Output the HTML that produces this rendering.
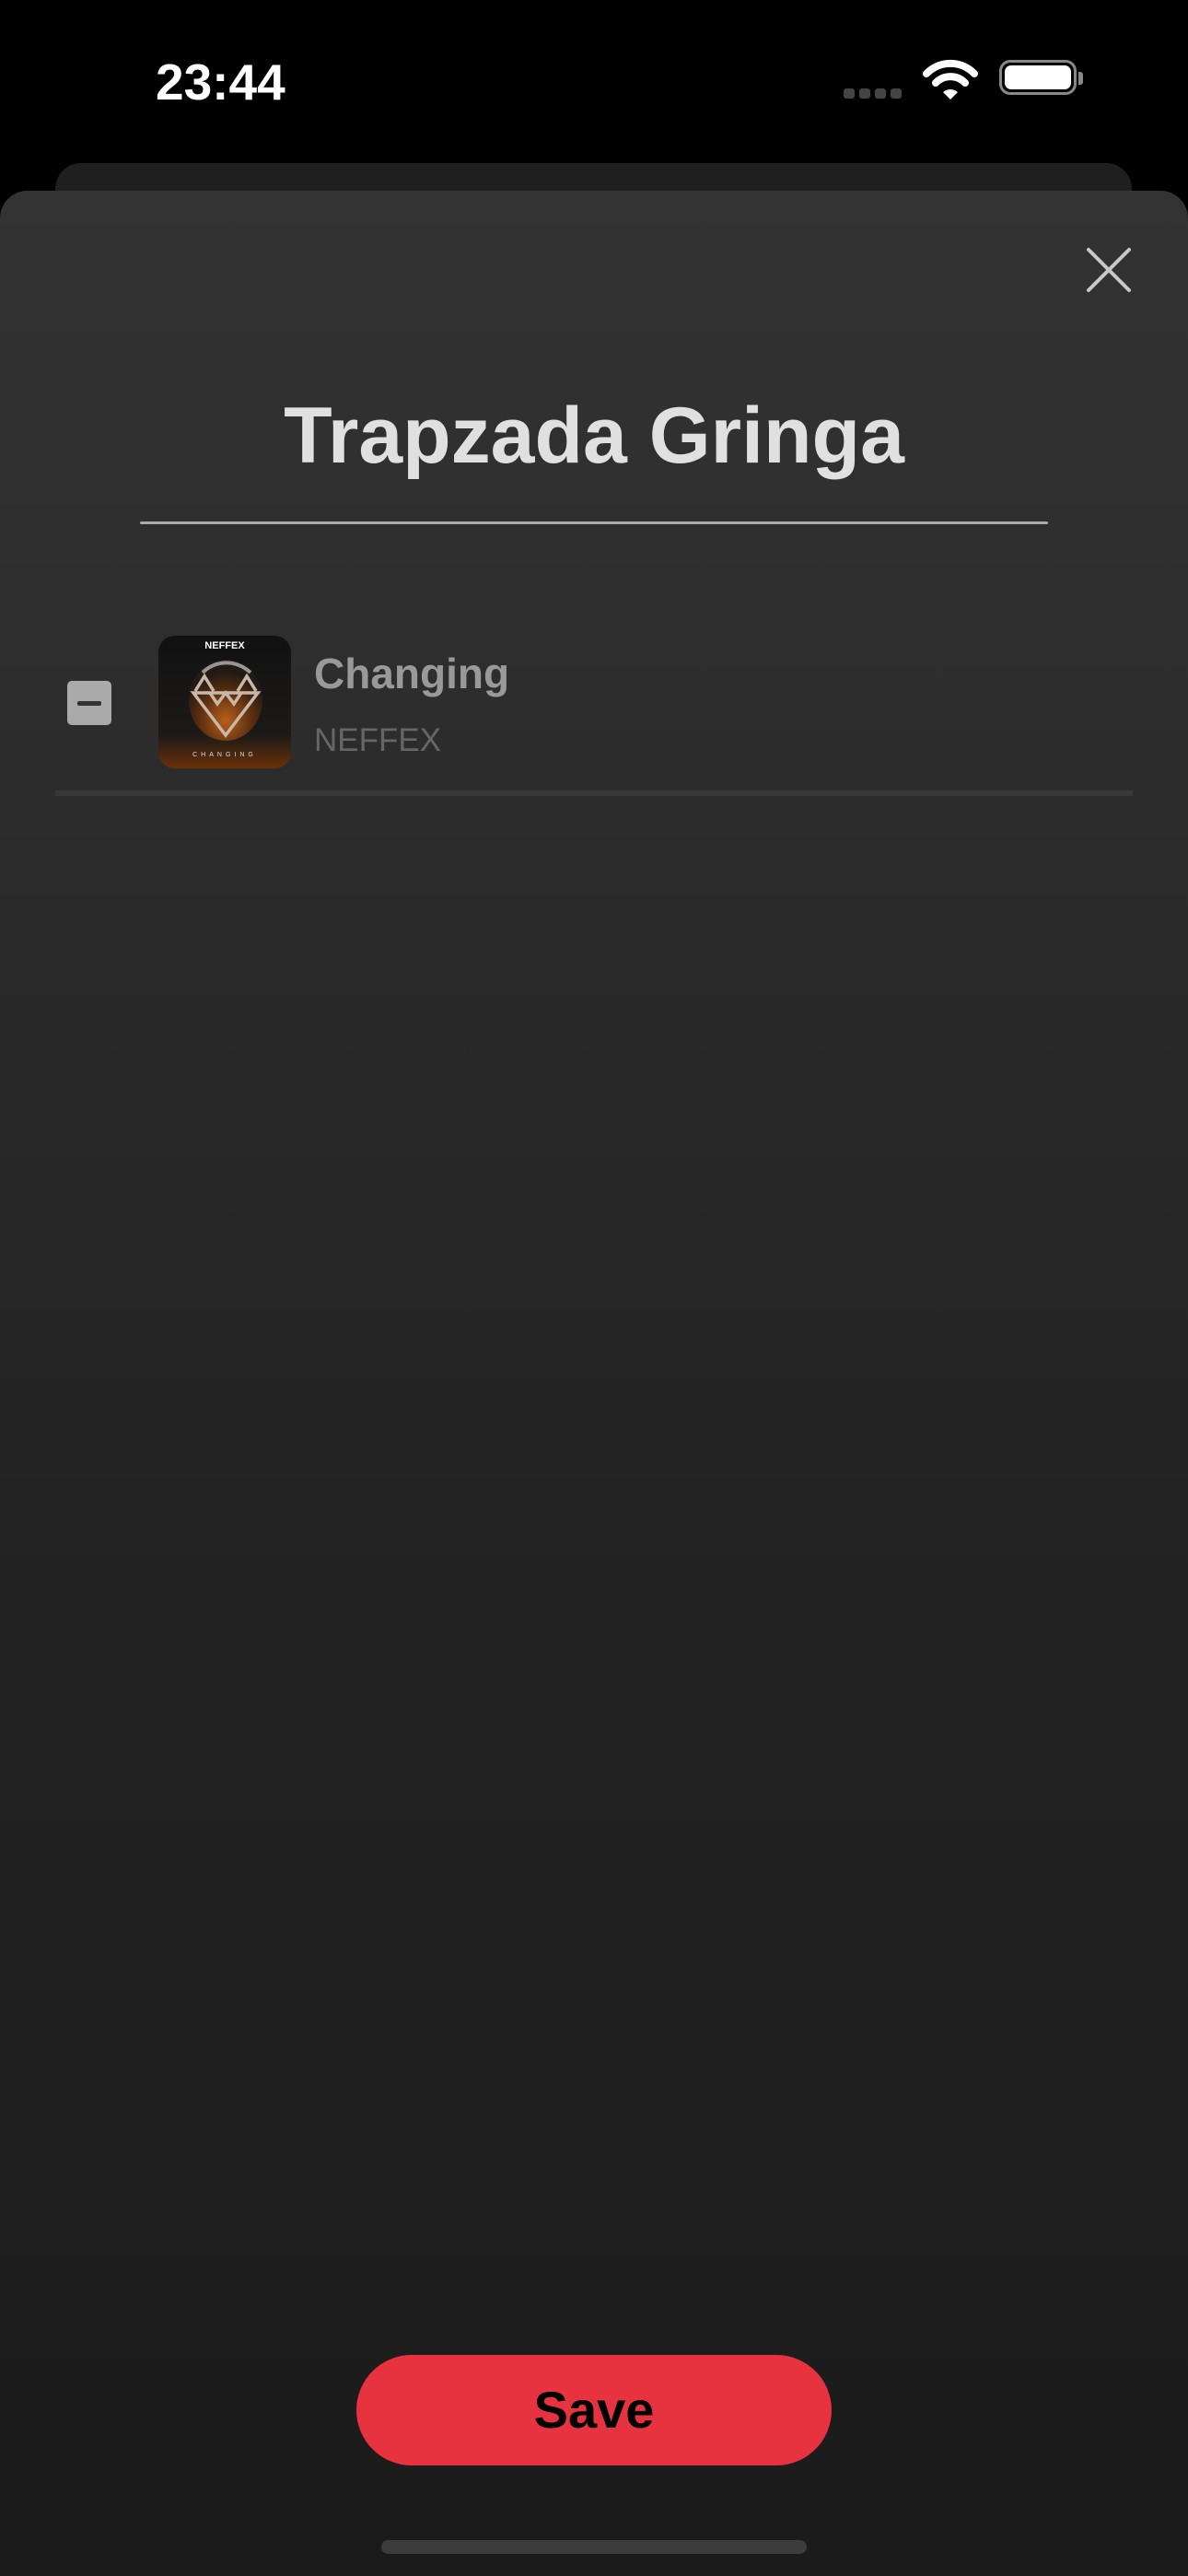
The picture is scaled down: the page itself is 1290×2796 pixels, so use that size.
<!DOCTYPE html>
<html><head><meta charset="utf-8"><style>
html,body{margin:0;padding:0}
body{width:1290px;height:2796px;background:#000;position:relative;overflow:hidden;font-family:"Liberation Sans",sans-serif}
.a{position:absolute}
</style></head><body>
<div class="a" style="left:169px;top:57px;font-size:55px;font-weight:bold;color:#fff">23:44</div>
<div class="a" style="left:916px;top:96px;width:12px;height:11px;border-radius:3px;background:#444"></div>
<div class="a" style="left:933px;top:96px;width:12px;height:11px;border-radius:3px;background:#444"></div>
<div class="a" style="left:950px;top:96px;width:12px;height:11px;border-radius:3px;background:#444"></div>
<div class="a" style="left:967px;top:96px;width:12px;height:11px;border-radius:3px;background:#444"></div>
<svg class="a" style="left:1002px;top:64px" width="60" height="46" viewBox="0 0 60 46">
<path d="M4 16 A36 36 0 0 1 56 16" stroke="#fff" stroke-width="8" fill="none" stroke-linecap="round"/>
<path d="M14 26 A22 22 0 0 1 46 26" stroke="#fff" stroke-width="8" fill="none" stroke-linecap="round"/>
<path d="M22 36 L30 44 L38 36 A12 12 0 0 0 22 36Z" fill="#fff"/>
</svg>
<div class="a" style="left:1085px;top:65px;width:84px;height:38px;border:3px solid #888;border-radius:12px;box-sizing:border-box"></div>
<div class="a" style="left:1091px;top:71px;width:72px;height:26px;background:#fff;border-radius:7px"></div>
<div class="a" style="left:1171px;top:78px;width:5px;height:14px;background:#888;border-radius:0 3px 3px 0"></div>

<div class="a" style="left:60px;top:177px;width:1169px;height:60px;background:#1f1f1f;border-radius:28px 28px 0 0"></div>
<div class="a" style="left:0;top:207px;width:1290px;height:2589px;background:linear-gradient(#333 0%,#2c2c2c 25%,#232323 55%,#1b1b1b 100%);border-radius:30px 30px 0 0"></div>

<svg class="a" style="left:1178px;top:268px" width="52" height="50"><path d="M4 3 L48 47 M48 3 L4 47" stroke="#c8c8c8" stroke-width="4" stroke-linecap="round"/></svg>

<div class="a" style="left:0;top:424px;width:1290px;text-align:center;font-size:86px;font-weight:bold;color:#e0e0e0">Trapzada Gringa</div>
<div class="a" style="left:152px;top:566px;width:986px;height:3px;background:#aaa;border-radius:2px"></div>

<div class="a" style="left:73px;top:739px;width:48px;height:48px;background:#aaa;border-radius:5px"></div>
<div class="a" style="left:84px;top:761px;width:26px;height:5px;background:#333;border-radius:2px"></div>

<svg class="a" style="left:172px;top:690px" width="144" height="144" viewBox="0 0 144 144">
<defs>
<linearGradient id="bg" x1="0" y1="0" x2="0" y2="1"><stop offset="0" stop-color="#111"/><stop offset="0.75" stop-color="#1c1a18"/><stop offset="1" stop-color="#6a3008"/></linearGradient>
<radialGradient id="orb" cx="0.5" cy="0.75" r="0.6"><stop offset="0" stop-color="#b8601a"/><stop offset="0.6" stop-color="#5a2e10"/><stop offset="1" stop-color="#221a15"/></radialGradient>
<clipPath id="c"><rect width="144" height="144" rx="18"/></clipPath>
</defs>
<g clip-path="url(#c)">
<rect width="144" height="144" fill="url(#bg)"/>
<ellipse cx="73" cy="70" rx="40" ry="44" fill="url(#orb)"/>
<path d="M48 40 A40 44 0 0 1 100 40" stroke="#ccc" stroke-width="4" fill="none" opacity="0.7"/>
<g stroke="#c8b8a8" stroke-width="3.5" fill="none">
<path d="M40 60 L50 44 L60 60"/><path d="M86 60 L96 44 L106 60"/>
<path d="M38 62 L108 62 L73 108 Z"/><path d="M56 62 L64 74 L73 62 L82 74 L90 62"/>
</g>
<text x="72" y="14" text-anchor="middle" font-size="11" font-weight="bold" fill="#fff" font-family="Liberation Sans">NEFFEX</text>
<text x="72" y="131" text-anchor="middle" font-size="7" letter-spacing="4" fill="#ddd" font-family="Liberation Sans">CHANGING</text>
</g>
</svg>

<div class="a" style="left:341px;top:704px;font-size:46px;font-weight:bold;color:#999">Changing</div>
<div class="a" style="left:341px;top:784px;font-size:35px;color:#666">NEFFEX</div>
<div class="a" style="left:60px;top:858px;width:1170px;height:6px;background:#383838"></div>

<div class="a" style="left:387px;top:2556px;width:516px;height:120px;background:#e6333f;border-radius:60px;text-align:center;line-height:120px;font-size:56px;font-weight:bold;color:#000">Save</div>
<div class="a" style="left:414px;top:2757px;width:462px;height:15px;background:#3c3c3c;border-radius:8px"></div>
</body></html>
